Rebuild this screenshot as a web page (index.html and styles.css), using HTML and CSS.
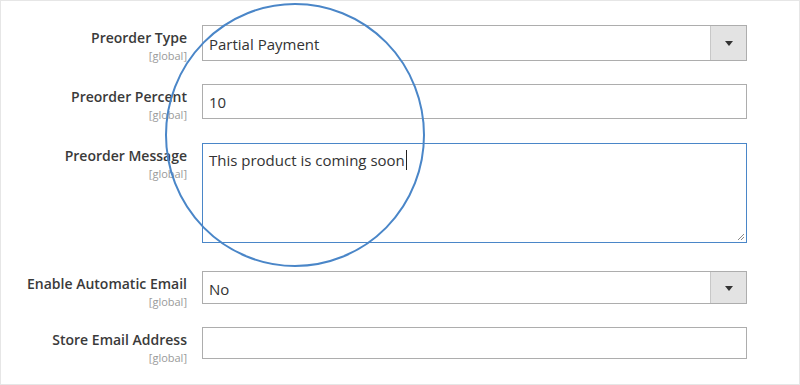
FILE: index.html
```html
<!DOCTYPE html>
<html lang="en">
<head>
  <meta charset="UTF-8" />
  <title>Preorder Settings</title>
  <link rel="stylesheet" href="styles.css">
</head>
<body>

  <div class="form">
    <div class="row row-type">
      <div class="label">Preorder Type<span class="scope">[global]</span></div>
      <div class="select tall">
        <span class="value">Partial Payment</span>
        <span class="arrow"></span>
      </div>
    </div>

    <div class="row row-percent">
      <div class="label">Preorder Percent<span class="scope">[global]</span></div>
      <div class="input">10</div>
    </div>

    <div class="row row-message">
      <div class="label">Preorder Message<span class="scope">[global]</span></div>
      <div class="textarea">
        This product is coming soon<span class="caret"></span>
        <svg class="grip" width="10" height="10" viewBox="0 0 10 10">
          <path d="M9 3 L3 9 M9 6 L6 9" stroke="#888" stroke-width="1" fill="none"/>
        </svg>
      </div>
    </div>

    <div class="row row-email">
      <div class="label">Enable Automatic Email<span class="scope">[global]</span></div>
      <div class="select">
        <span class="value">No</span>
        <span class="arrow"></span>
      </div>
    </div>

    <div class="row row-store">
      <div class="label">Store Email Address<span class="scope">[global]</span></div>
      <div class="input short"></div>
    </div>
  </div>

  <!-- highlight ring drawn over the form -->
  <svg class="ring" width="800" height="385" viewBox="0 0 800 385">
    <ellipse cx="295" cy="135" rx="129" ry="131" fill="none" stroke="#4a86c8" stroke-width="2"/>
  </svg>

</body>
</html>
```

FILE: styles.css
```css
html, body {
  margin: 0;
  padding: 0;
}

body {
  position: relative;
  width: 800px;
  height: 385px;
  box-sizing: border-box;
  border: 1px solid #e6e6e6;
  background: #fff;
  font-family: 'Open Sans', sans-serif;
  color: #333;
  overflow: hidden;
}

.form {
  padding-top: 24px;
}

.row {
  display: flex;
  align-items: flex-start;
  gap: 15px;
  margin-bottom: 23px;
}

.row-percent { margin-bottom: 24px; }
.row-message { margin-bottom: 28px; }

.label {
  box-sizing: border-box;
  width: 186px;
  height: 33px;
  text-align: right;
  font-size: 14px;
  font-weight: 600;
  line-height: 18px;
  padding-top: 4px;
  color: #3a3a3a;
}

.scope {
  display: block;
  margin-top: 2px;
  font-size: 11px;
  font-weight: 400;
  line-height: 13px;
  color: #9a9a9a;
}

.select,
.input,
.textarea {
  box-sizing: border-box;
  width: 545px;
  height: 35px;
  border: 1px solid #adadad;
  background: #fff;
  font-size: 15px;
  color: #333;
  display: flex;
  align-items: center;
  padding-left: 6px;
}

.select.tall { height: 36px; }
.row-email .select { height: 33px; }
.input.short { height: 32px; }

.select .value {
  flex: 1;
  padding-top: 2px;
}

.arrow {
  width: 35px;
  height: 100%;
  background: #e3e3e3;
  border-left: 1px solid #c8c8c8;
  position: relative;
}

.arrow::after {
  content: "";
  position: absolute;
  left: 14px;
  top: 50%;
  margin-top: -2px;
  border-left: 4px solid transparent;
  border-right: 4px solid transparent;
  border-top: 5px solid #333;
}

.textarea {
  position: relative;
  height: 100px;
  align-items: flex-start;
  padding-top: 6px;
  border-color: #4a86c8;
}

.caret {
  display: inline-block;
  width: 1px;
  height: 20px;
  background: #222;
  margin-left: 1px;
}

.grip {
  position: absolute;
  right: 1px;
  bottom: 1px;
}

.ring {
  position: absolute;
  left: -1px;
  top: -1px;
  pointer-events: none;
}
```
